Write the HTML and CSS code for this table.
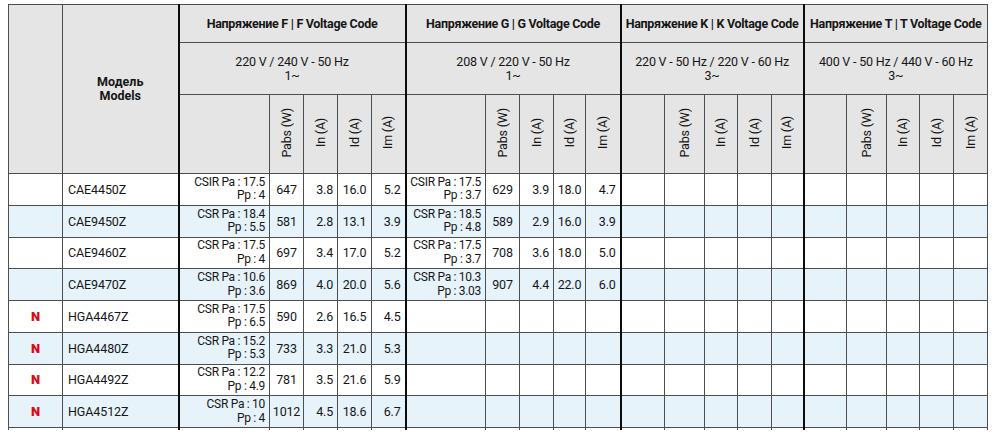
FILE: index.html
```html
<!DOCTYPE html>
<html lang="ru">
<head>
<meta charset="utf-8">
<title>Compressors</title>
<link rel="stylesheet" href="styles.css">
</head>
<body>
<div class="wrap">
<table class="grid">
  <colgroup>
    <col style="width:54px"><col style="width:116px">
    <col style="width:91px"><col style="width:34px"><col style="width:34px"><col style="width:34px"><col style="width:34px">
    <col style="width:80px"><col style="width:34px"><col style="width:34px"><col style="width:32px"><col style="width:35px">
    <col style="width:44px"><col style="width:40px"><col style="width:33px"><col style="width:34px"><col style="width:32px">
    <col style="width:43px"><col style="width:40px"><col style="width:33px"><col style="width:34px"><col style="width:34px">
  </colgroup>
  <thead>
    <tr class="h1">
      <th rowspan="3" class="hd"></th>
      <th rowspan="3" class="hd model">Модель<br>Models</th>
      <th colspan="5" class="hd sl title">Напряжение F | F Voltage Code</th>
      <th colspan="5" class="hd sl title">Напряжение G | G Voltage Code</th>
      <th colspan="5" class="hd sl title">Напряжение K | K Voltage Code</th>
      <th colspan="5" class="hd sl title">Напряжение T | T Voltage Code</th>
    </tr>
    <tr class="h2">
      <th colspan="5" class="hd sl volt">220 V / 240 V - 50 Hz<br>1~</th>
      <th colspan="5" class="hd sl volt">208 V / 220 V - 50 Hz<br>1~</th>
      <th colspan="5" class="hd sl volt">220 V - 50 Hz / 220 V - 60 Hz<br>3~</th>
      <th colspan="5" class="hd sl volt">400 V - 50 Hz / 440 V - 60 Hz<br>3~</th>
    </tr>
    <tr class="h3">
      <th class="hd sl"></th><th class="hd"><span class="vert">Pabs (W)</span></th><th class="hd"><span class="vert">In (A)</span></th><th class="hd"><span class="vert">Id (A)</span></th><th class="hd"><span class="vert">Im (A)</span></th>
      <th class="hd sl"></th><th class="hd"><span class="vert">Pabs (W)</span></th><th class="hd"><span class="vert">In (A)</span></th><th class="hd"><span class="vert">Id (A)</span></th><th class="hd"><span class="vert">Im (A)</span></th>
      <th class="hd sl"></th><th class="hd"><span class="vert">Pabs (W)</span></th><th class="hd"><span class="vert">In (A)</span></th><th class="hd"><span class="vert">Id (A)</span></th><th class="hd"><span class="vert">Im (A)</span></th>
      <th class="hd sl"></th><th class="hd"><span class="vert">Pabs (W)</span></th><th class="hd"><span class="vert">In (A)</span></th><th class="hd"><span class="vert">Id (A)</span></th><th class="hd"><span class="vert">Im (A)</span></th>
    </tr>
  </thead>
  <tbody>
    <tr class="row">
      <td></td><td class="mdl">CAE4450Z</td>
      <td class="sl csr">CSIR Pa : 17.5<br>Pp : 4</td><td class="c">647</td><td class="r">3.8</td><td class="c">16.0</td><td class="r">5.2</td>
      <td class="sl csr">CSIR Pa : 17.5<br>Pp : 3.7</td><td class="c">629</td><td class="r">3.9</td><td class="c">18.0</td><td class="r">4.7</td>
      <td class="sl"></td><td></td><td></td><td></td><td></td>
      <td class="sl"></td><td></td><td></td><td></td><td></td>
    </tr>
    <tr class="row alt">
      <td></td><td class="mdl">CAE9450Z</td>
      <td class="sl csr">CSR Pa : 18.4<br>Pp : 5.5</td><td class="c">581</td><td class="r">2.8</td><td class="c">13.1</td><td class="r">3.9</td>
      <td class="sl csr">CSR Pa : 18.5<br>Pp : 4.8</td><td class="c">589</td><td class="r">2.9</td><td class="c">16.0</td><td class="r">3.9</td>
      <td class="sl"></td><td></td><td></td><td></td><td></td>
      <td class="sl"></td><td></td><td></td><td></td><td></td>
    </tr>
    <tr class="row">
      <td></td><td class="mdl">CAE9460Z</td>
      <td class="sl csr">CSR Pa : 17.5<br>Pp : 4</td><td class="c">697</td><td class="r">3.4</td><td class="c">17.0</td><td class="r">5.2</td>
      <td class="sl csr">CSR Pa : 17.5<br>Pp : 3.7</td><td class="c">708</td><td class="r">3.6</td><td class="c">18.0</td><td class="r">5.0</td>
      <td class="sl"></td><td></td><td></td><td></td><td></td>
      <td class="sl"></td><td></td><td></td><td></td><td></td>
    </tr>
    <tr class="row alt">
      <td></td><td class="mdl">CAE9470Z</td>
      <td class="sl csr">CSR Pa : 10.6<br>Pp : 3.6</td><td class="c">869</td><td class="r">4.0</td><td class="c">20.0</td><td class="r">5.6</td>
      <td class="sl csr">CSR Pa : 10.3<br>Pp : 3.03</td><td class="c">907</td><td class="r">4.4</td><td class="c">22.0</td><td class="r">6.0</td>
      <td class="sl"></td><td></td><td></td><td></td><td></td>
      <td class="sl"></td><td></td><td></td><td></td><td></td>
    </tr>
    <tr class="row">
      <td class="new">N</td><td class="mdl">HGA4467Z</td>
      <td class="sl csr">CSR Pa : 17.5<br>Pp : 6.5</td><td class="c">590</td><td class="r">2.6</td><td class="c">16.5</td><td class="r">4.5</td>
      <td class="sl"></td><td></td><td></td><td></td><td></td>
      <td class="sl"></td><td></td><td></td><td></td><td></td>
      <td class="sl"></td><td></td><td></td><td></td><td></td>
    </tr>
    <tr class="row alt">
      <td class="new">N</td><td class="mdl">HGA4480Z</td>
      <td class="sl csr">CSR Pa : 15.2<br>Pp : 5.3</td><td class="c">733</td><td class="r">3.3</td><td class="c">21.0</td><td class="r">5.3</td>
      <td class="sl"></td><td></td><td></td><td></td><td></td>
      <td class="sl"></td><td></td><td></td><td></td><td></td>
      <td class="sl"></td><td></td><td></td><td></td><td></td>
    </tr>
    <tr class="row">
      <td class="new">N</td><td class="mdl">HGA4492Z</td>
      <td class="sl csr">CSR Pa : 12.2<br>Pp : 4.9</td><td class="c">781</td><td class="r">3.5</td><td class="c">21.6</td><td class="r">5.9</td>
      <td class="sl"></td><td></td><td></td><td></td><td></td>
      <td class="sl"></td><td></td><td></td><td></td><td></td>
      <td class="sl"></td><td></td><td></td><td></td><td></td>
    </tr>
    <tr class="row alt">
      <td class="new">N</td><td class="mdl">HGA4512Z</td>
      <td class="sl csr">CSR Pa : 10<br>Pp : 4</td><td class="c">1012</td><td class="r">4.5</td><td class="c">18.6</td><td class="r">6.7</td>
      <td class="sl"></td><td></td><td></td><td></td><td></td>
      <td class="sl"></td><td></td><td></td><td></td><td></td>
      <td class="sl"></td><td></td><td></td><td></td><td></td>
    </tr>
    <tr class="stub">
      <td></td><td></td>
      <td class="sl"></td><td></td><td></td><td></td><td></td>
      <td class="sl"></td><td></td><td></td><td></td><td></td>
      <td class="sl"></td><td></td><td></td><td></td><td></td>
      <td class="sl"></td><td></td><td></td><td></td><td></td>
    </tr>
  </tbody>
</table>
</div>
</body>
</html>
```

FILE: styles.css
```css
html, body {
  margin: 0;
  padding: 0;
  background: #ffffff;
}

body {
  font-family: Roboto, "Liberation Sans", Arial, sans-serif;
  font-size: 12.5px;
  color: #161616;
}

.wrap {
  padding: 4px 0 0 8px;
}

.grid {
  border-collapse: collapse;
  table-layout: fixed;
  width: 979px;
}

.grid th,
.grid td {
  border: 1px solid #4e4e4e;
  padding: 0;
  overflow: hidden;
  white-space: nowrap;
}

.grid .sl {
  border-left: 2px solid #0c0c0c;
}

.hd {
  background: #e5e5e5;
  font-weight: normal;
  text-align: center;
  vertical-align: middle;
}

.h1 { height: 38px; }
.h2 { height: 52px; }
.h3 { height: 79px; }

.title {
  font-weight: 700;
  font-size: 12.5px;
  letter-spacing: -0.3px;
}

.model {
  font-weight: 700;
  font-size: 12.5px;
  line-height: 14px;
}

.volt {
  font-size: 12.5px;
  line-height: 14px;
  letter-spacing: -0.2px;
  padding-bottom: 2px;
}

.vert {
  display: inline-block;
  writing-mode: vertical-rl;
  transform: rotate(180deg);
  font-size: 12.5px;
  line-height: 14px;
  letter-spacing: -0.2px;
}

.row {
  height: 31.75px;
}

.row td {
  background: #ffffff;
  vertical-align: middle;
}

.row.alt td {
  background: #e6f3fa;
}

.stub {
  height: 2px;
}

.stub td {
  border-bottom: none;
  height: 2px;
}

.mdl {
  text-align: left;
  padding-left: 5px !important;
  letter-spacing: -0.1px;
}

.csr {
  text-align: right;
  padding-right: 4px !important;
  font-size: 12px;
  line-height: 13.5px;
  letter-spacing: -0.3px;
}

.c {
  text-align: center;
  letter-spacing: -0.2px;
}

.r {
  text-align: right;
  padding-right: 4px !important;
  letter-spacing: -0.2px;
}

.new {
  text-align: center;
  color: #e30613;
  font-weight: 900;
  font-size: 13px;
}
```
